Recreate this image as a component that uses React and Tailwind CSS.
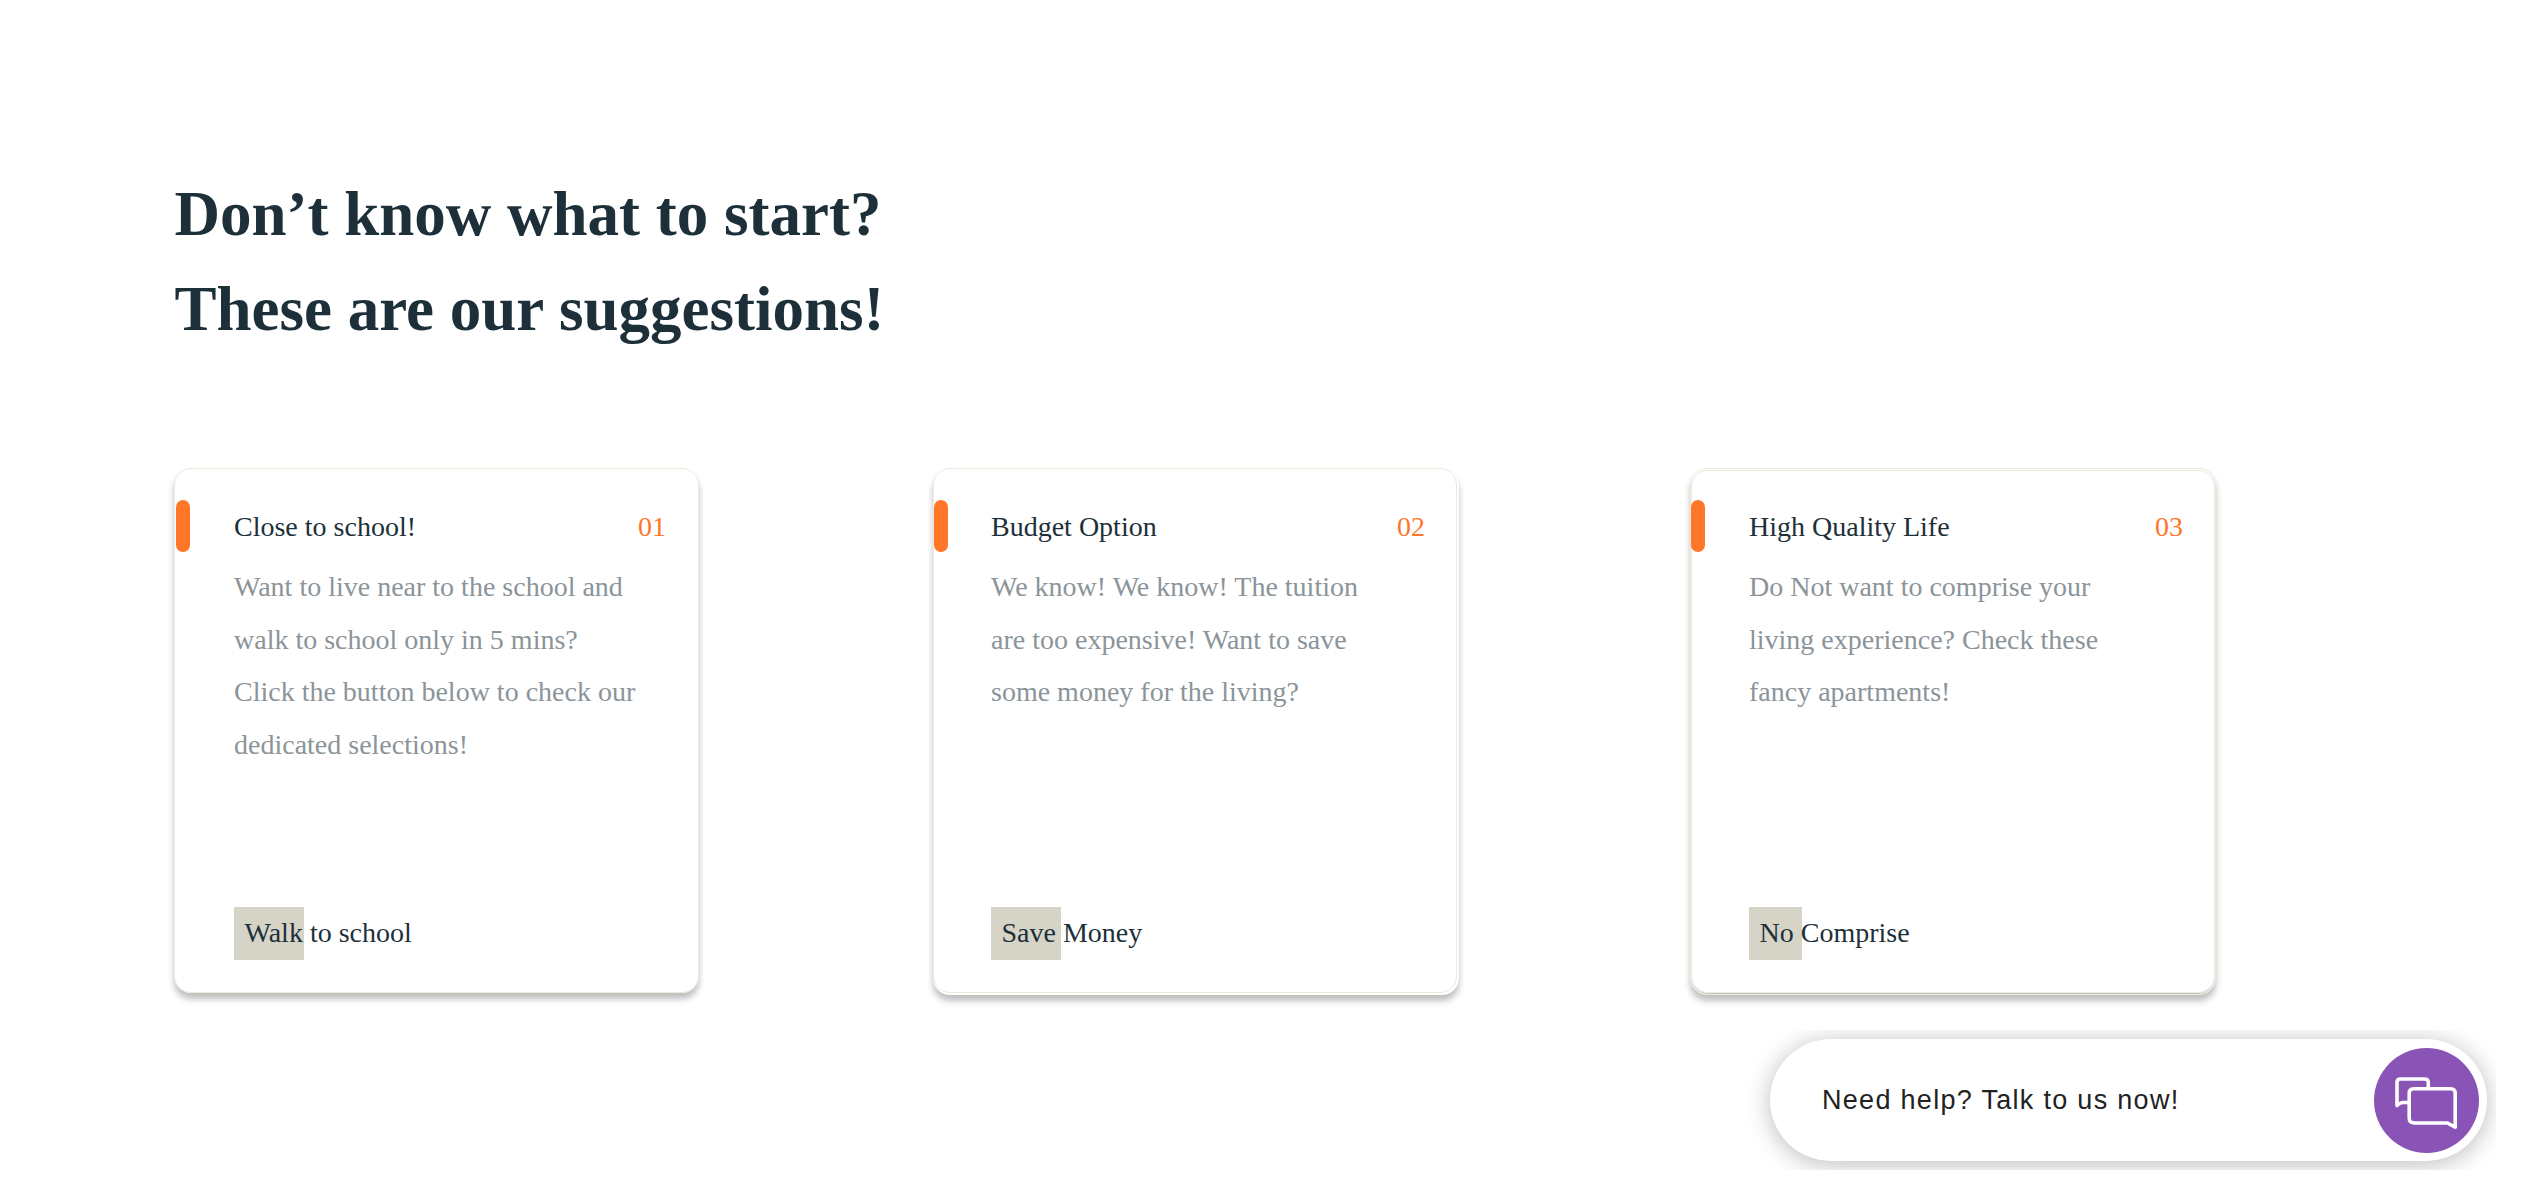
const cards = [
  {
    title: "Close to school!",
    number: "01",
    lines: ["Want to live near to the school and", "walk to school only in 5 mins?", "Click the button below to check our", "dedicated selections!"],
    action: "Walk to school",
    frame: "w-[525px] h-[525px]",
    inner: "w-[525px] h-[525px] border border-[#ebeadb]",
    mark: "top-[32px] left-[2px]",
    pad: "pt-[32px] pl-[60px]",
    header: "w-[432px]",
    swatch: "w-[70px]",
  },
  {
    title: "Budget Option",
    number: "02",
    lines: ["We know! We know! The tuition", "are too expensive! Want to save", "some money for the living?"],
    action: "Save Money",
    frame: "w-[526px] h-[527px]",
    inner: "w-[524px] h-[525px] border border-[#ebeadb]",
    mark: "top-[32px] left-[1px]",
    pad: "pt-[32px] pl-[58px]",
    header: "w-[434px]",
    swatch: "w-[70px]",
  },
  {
    title: "High Quality Life",
    number: "03",
    lines: ["Do Not want to comprise your", "living experience? Check these", "fancy apartments!"],
    action: "No Comprise",
    frame: "w-[526px] h-[527px] border border-[#ebeadb]",
    inner: "w-[524px] h-[523px] mt-px border border-[#ebeadb] shadow-[0_1px_0_#c4c4c0]",
    mark: "top-[31px] left-0",
    pad: "pt-[31px] pl-[58px]",
    header: "w-[434px]",
    swatch: "w-[53px]",
  },
];

function Card({ card }) {
  return (
    <article className={`relative rounded-[17px] bg-white shadow-[0_6px_6px_rgba(0,0,0,0.25)] ${card.frame}`}>
      <div className={`rounded-[17px] ${card.inner}`} />
      <span className={`absolute h-[52px] w-[14px] rounded-[7px] bg-[#ff7628] ${card.mark}`} />
      <div className={`absolute inset-0 flex flex-col ${card.pad}`}>
        <header className={`flex h-[53px] items-center justify-between text-[#1d3039] ${card.header}`}>
          <h2>{card.title}</h2>
          <span className="text-[#ff7628]">{card.number}</span>
        </header>
        <p className="mt-[8px] h-[346px] leading-[52.5px] whitespace-nowrap text-[#8b9499]">
          {card.lines.map((line) => (
            <span key={line} className="block">{line}</span>
          ))}
        </p>
        <div className="relative flex h-[53px] items-center pb-[2px] pl-[10.5px] text-[#1d3039]">
          <span className={`absolute top-0 left-0 h-[53px] bg-[#d6d4c7] ${card.swatch}`} />
          <span className="relative">{card.action}</span>
        </div>
      </div>
    </article>
  );
}

function ChatIcon() {
  return (
    <svg viewBox="0 0 105 105" className="size-[105px]" fill="none" stroke="#fff" strokeWidth="3.6" strokeLinejoin="round">
      <path d="M34 54.500H29.500Q26 54.500 23 57.500V34.500Q23 31 26.500 31H50.500Q54.300 31 54.300 34.500V39" />
      <path d="M39.500 40.800H76.500Q81.200 40.800 81.200 45.500V79.300L73.500 75H40.500Q35.200 75 35.200 70V45.500Q35.200 40.800 39.500 40.800Z" />
    </svg>
  );
}

export default function App() {
  return (
    <main className="relative h-[1179px] w-[2523px] overflow-hidden bg-white pt-[167px] pl-[174px] font-['Liberation_Serif',serif] text-[28px]">
      <h1 className="h-[190px] pl-[0.5px] text-[63px] leading-[95px] font-bold whitespace-nowrap text-[#1d3039]">
        Don’t know what to start?
        <br />
        These are our suggestions!
      </h1>
      <section className="mt-[111px] flex items-start">
        <Card card={cards[0]} />
        <div className="ml-[234px]"><Card card={cards[1]} /></div>
        <div className="ml-[231px]"><Card card={cards[2]} /></div>
      </section>
      <aside className="absolute top-[1030px] left-[1740px] h-[140px] w-[756px] overflow-hidden">
        <div className="mt-[9px] ml-[30px] flex h-[122px] w-[717px] items-center rounded-full bg-white pr-[8px] pl-[52px] shadow-[0_3px_24px_rgba(0,0,0,0.27)]">
          <span className="flex-1 font-['Liberation_Sans',sans-serif] text-[27px] tracking-[1.3px] text-[#222]">Need help? Talk to us now!</span>
          <span className="size-[105px] rounded-full bg-[#8a53b6]"><ChatIcon /></span>
        </div>
      </aside>
    </main>
  );
}
